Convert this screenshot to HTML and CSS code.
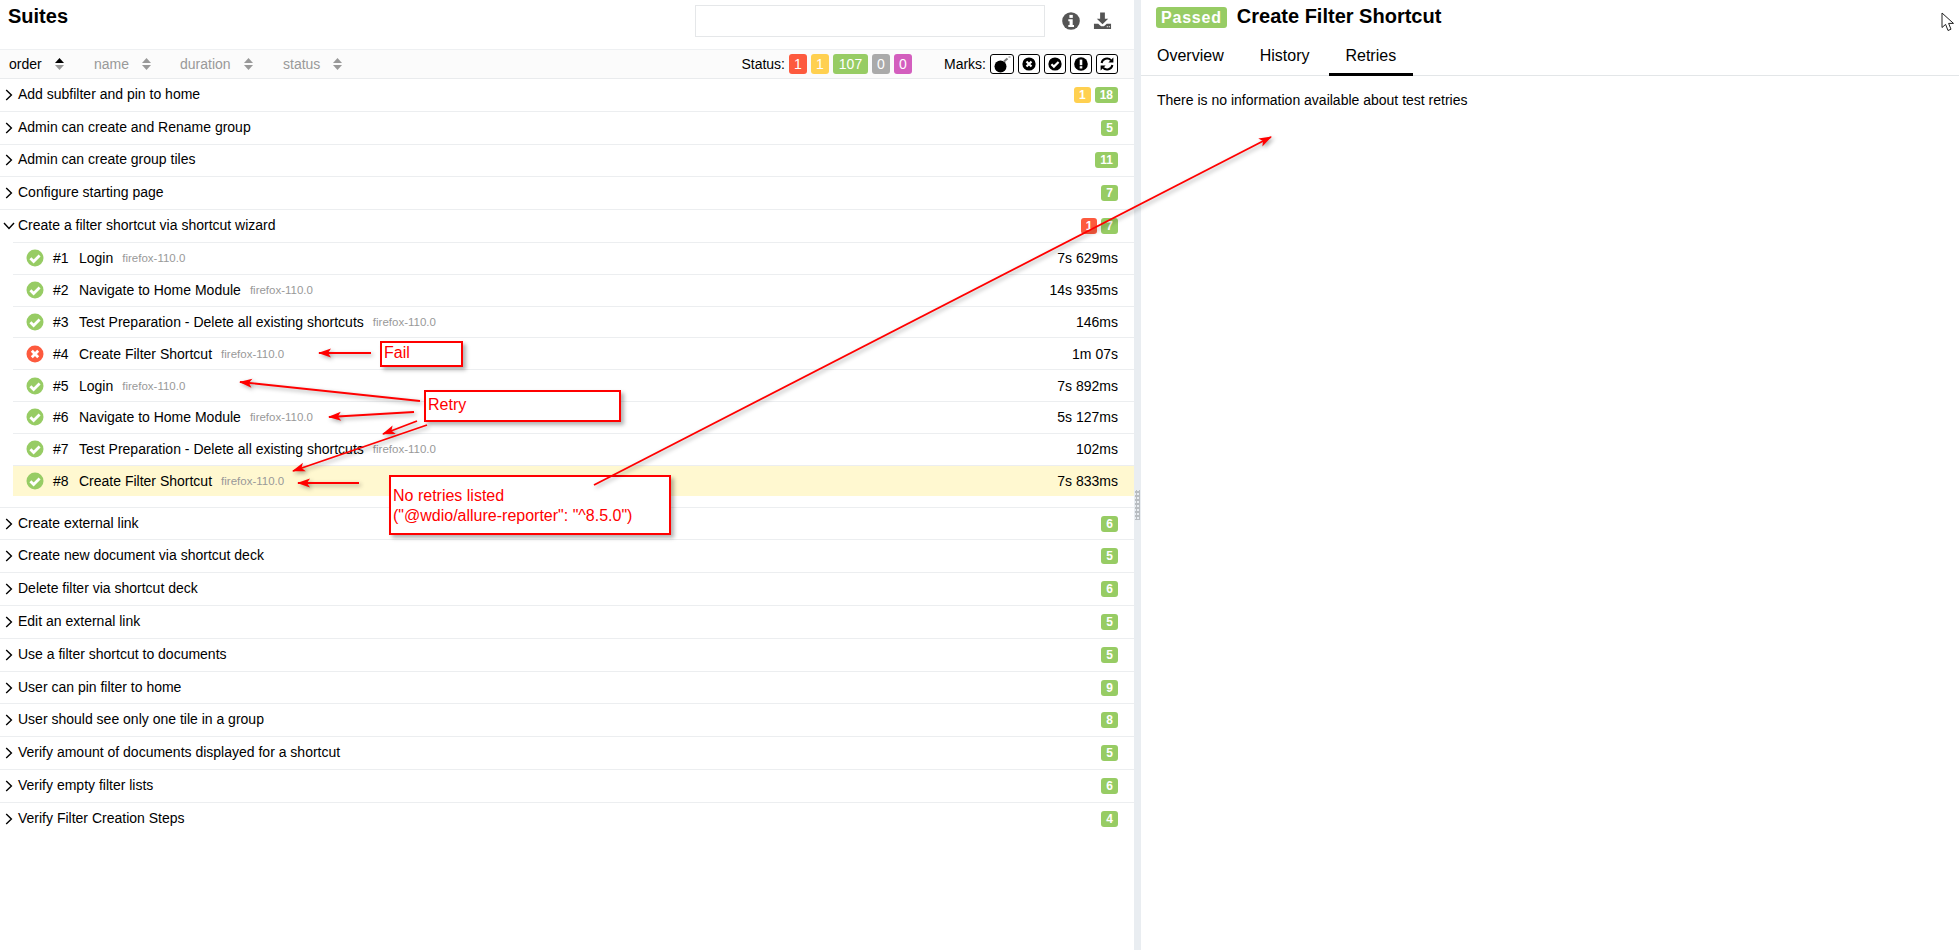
FILE: index.html
```html
<!DOCTYPE html>
<html lang="en">
<head>
<meta charset="utf-8">
<title>Allure Report - Suites</title>
<link rel="stylesheet" href="styles.css">
</head>
<body>
<svg class="defs" width="0" height="0" aria-hidden="true">
  <defs>
    <symbol id="ok" viewBox="0 0 18 18"><circle cx="9" cy="9" r="8.5" fill="currentColor"/><path d="M4.4 9.2 7.6 12.4 13.6 6.4" fill="none" stroke="#fff" stroke-width="2.8"/></symbol>
    <symbol id="bad" viewBox="0 0 18 18"><circle cx="9" cy="9" r="8.5" fill="currentColor"/><path d="M5.8 5.8 12.2 12.2M12.2 5.8 5.8 12.2" fill="none" stroke="#fff" stroke-width="2.8"/></symbol>
    <symbol id="sort" viewBox="0 0 9 12"><path d="M4.5 0 9 5H0Z" fill="currentColor"/><path d="M0 7H9L4.5 12Z" fill="#999"/></symbol>
    <symbol id="chev" viewBox="0 0 8 12"><path d="M1.2 1 6.4 6 1.2 11" fill="none" stroke="currentColor" stroke-width="1.4"/></symbol>
    <symbol id="down" viewBox="0 0 12 8"><path d="M1 1 6 6.4 11 1" fill="none" stroke="currentColor" stroke-width="1.4"/></symbol>
  </defs>
</svg>

<main class="app">
  <section class="left">
    <header class="head">
      <h2 class="title">Suites</h2>
      <div class="search"></div>
      <svg class="ico-info" width="18" height="18" viewBox="0 0 18 18"><circle cx="9" cy="9" r="8.8" fill="#555"/><rect x="7.4" y="2.9" width="3.4" height="3" fill="#fff"/><path d="M6.3 7.3H10.7V13H12V15H6.3V13H7.6V9.3H6.3Z" fill="#fff"/></svg>
      <svg class="ico-dl" width="19" height="18" viewBox="0 0 20 18"><path d="M7.5 0H12.5V6.5H16L10 12.5 4 6.5H7.5Z" fill="#555"/><path d="M1 12H5.5L8.5 14.5H11.5L14.5 12H19V17.5H1Z" fill="#555"/><path d="M14.5 15H15.7M16.6 15H17.8" stroke="#fff" stroke-width="1.2"/></svg>
    </header>

    <div class="bar">
      <span class="sorter active sorter-order">order <svg class="sort" width="9" height="12"><use href="#sort"/></svg></span>
      <span class="sorter sorter-name">name <svg class="sort" width="9" height="12"><use href="#sort"/></svg></span>
      <span class="sorter sorter-duration">duration <svg class="sort" width="9" height="12"><use href="#sort"/></svg></span>
      <span class="sorter sorter-status">status <svg class="sort" width="9" height="12"><use href="#sort"/></svg></span>
      <span class="spacer"></span>
      <span class="bar-label">Status:</span>
      <span class="pill failed">1</span><span class="pill broken">1</span><span class="pill passed wide">107</span><span class="pill skipped">0</span><span class="pill unknown">0</span>
      <span class="bar-label marks-label">Marks:</span>
      <span class="mark first"><svg width="20" height="17" viewBox="0 0 20 17"><circle cx="8.5" cy="10.5" r="6" fill="#000"/><path d="M12 5.5 15.5 2.5" stroke="#777" stroke-width="2"/><path d="M16.5 1 18.5 1" stroke="#999" stroke-width="1.2"/></svg></span>
      <span class="mark"><svg width="14" height="14" viewBox="0 0 18 18"><use href="#bad"/></svg></span>
      <span class="mark"><svg width="14" height="14" viewBox="0 0 18 18"><use href="#ok"/></svg></span>
      <span class="mark"><svg width="14" height="14" viewBox="0 0 14 14"><circle cx="7" cy="7" r="6.8" fill="#000"/><rect x="5.7" y="2.6" width="2.6" height="5.6" fill="#fff"/><rect x="5.7" y="9.2" width="2.6" height="2.3" fill="#fff"/></svg></span>
      <span class="mark"><svg width="14" height="14" viewBox="0 0 14 14"><path d="M1.6 6A5.5 5.5 0 0 1 11 3.2" fill="none" stroke="#000" stroke-width="2"/><path d="M13.4.6V5.6H8.4Z" fill="#000"/><path d="M12.4 8A5.5 5.5 0 0 1 3 10.8" fill="none" stroke="#000" stroke-width="2"/><path d="M.6 13.4V8.4H5.6Z" fill="#000"/></svg></span>
    </div>

    <div class="row"><svg class="chev" width="8" height="12"><use href="#chev"/></svg><span class="name">Add subfilter and pin to home</span><span class="count broken">1</span><span class="count passed">18</span></div>
    <div class="row"><svg class="chev" width="8" height="12"><use href="#chev"/></svg><span class="name">Admin can create and Rename group</span><span class="count passed">5</span></div>
    <div class="row"><svg class="chev" width="8" height="12"><use href="#chev"/></svg><span class="name">Admin can create group tiles</span><span class="count passed">11</span></div>
    <div class="row"><svg class="chev" width="8" height="12"><use href="#chev"/></svg><span class="name">Configure starting page</span><span class="count passed">7</span></div>

    <div class="group">
      <div class="row open"><svg class="chev-open" width="12" height="8"><use href="#down"/></svg><span class="name">Create a filter shortcut via shortcut wizard</span><span class="count failed">1</span><span class="count passed">7</span></div>
      <div class="case"><svg class="st ok" width="18" height="18"><use href="#ok"/></svg><span class="num">#1</span><span class="case-name">Login</span><span class="env">firefox-110.0</span><span class="time">7s 629ms</span></div>
      <div class="case"><svg class="st ok" width="18" height="18"><use href="#ok"/></svg><span class="num">#2</span><span class="case-name">Navigate to Home Module</span><span class="env">firefox-110.0</span><span class="time">14s 935ms</span></div>
      <div class="case"><svg class="st ok" width="18" height="18"><use href="#ok"/></svg><span class="num">#3</span><span class="case-name">Test Preparation - Delete all existing shortcuts</span><span class="env">firefox-110.0</span><span class="time">146ms</span></div>
      <div class="case"><svg class="st bad" width="18" height="18"><use href="#bad"/></svg><span class="num">#4</span><span class="case-name">Create Filter Shortcut</span><span class="env">firefox-110.0</span><span class="time">1m 07s</span></div>
      <div class="case"><svg class="st ok" width="18" height="18"><use href="#ok"/></svg><span class="num">#5</span><span class="case-name">Login</span><span class="env">firefox-110.0</span><span class="time">7s 892ms</span></div>
      <div class="case"><svg class="st ok" width="18" height="18"><use href="#ok"/></svg><span class="num">#6</span><span class="case-name">Navigate to Home Module</span><span class="env">firefox-110.0</span><span class="time">5s 127ms</span></div>
      <div class="case"><svg class="st ok" width="18" height="18"><use href="#ok"/></svg><span class="num">#7</span><span class="case-name">Test Preparation - Delete all existing shortcuts</span><span class="env">firefox-110.0</span><span class="time">102ms</span></div>
      <div class="case selected"><svg class="st ok" width="18" height="18"><use href="#ok"/></svg><span class="num">#8</span><span class="case-name">Create Filter Shortcut</span><span class="env">firefox-110.0</span><span class="time">7s 833ms</span></div>
    </div>

    <div class="row"><svg class="chev" width="8" height="12"><use href="#chev"/></svg><span class="name">Create external link</span><span class="count passed">6</span></div>
    <div class="row"><svg class="chev" width="8" height="12"><use href="#chev"/></svg><span class="name">Create new document via shortcut deck</span><span class="count passed">5</span></div>
    <div class="row"><svg class="chev" width="8" height="12"><use href="#chev"/></svg><span class="name">Delete filter via shortcut deck</span><span class="count passed">6</span></div>
    <div class="row"><svg class="chev" width="8" height="12"><use href="#chev"/></svg><span class="name">Edit an external link</span><span class="count passed">5</span></div>
    <div class="row"><svg class="chev" width="8" height="12"><use href="#chev"/></svg><span class="name">Use a filter shortcut to documents</span><span class="count passed">5</span></div>
    <div class="row"><svg class="chev" width="8" height="12"><use href="#chev"/></svg><span class="name">User can pin filter to home</span><span class="count passed">9</span></div>
    <div class="row"><svg class="chev" width="8" height="12"><use href="#chev"/></svg><span class="name">User should see only one tile in a group</span><span class="count passed">8</span></div>
    <div class="row"><svg class="chev" width="8" height="12"><use href="#chev"/></svg><span class="name">Verify amount of documents displayed for a shortcut</span><span class="count passed">5</span></div>
    <div class="row"><svg class="chev" width="8" height="12"><use href="#chev"/></svg><span class="name">Verify empty filter lists</span><span class="count passed">6</span></div>
    <div class="row last"><svg class="chev" width="8" height="12"><use href="#chev"/></svg><span class="name">Verify Filter Creation Steps</span><span class="count passed">4</span></div>
  </section>

  <div class="splitter"><span class="grip"></span></div>

  <section class="right">
    <header class="detail-head">
      <span class="status-label">Passed</span>
      <h2 class="detail-title">Create Filter Shortcut</h2>
    </header>
    <nav class="tabs">
      <span class="tab">Overview</span>
      <span class="tab">History</span>
      <span class="tab current">Retries</span>
    </nav>
    <p class="empty">There is no information available about test retries</p>
  </section>
</main>

<div class="note note-fail">Fail</div>
<div class="note note-retry">Retry</div>
<div class="note note-none">No retries listed<br>("@wdio/allure-reporter": "^8.5.0")</div>

<svg class="arrows" width="1959" height="950" viewBox="0 0 1959 950" aria-hidden="true">
  <defs>
    <marker id="head" markerUnits="userSpaceOnUse" markerWidth="14" markerHeight="10" refX="1" refY="5" orient="auto">
      <path d="M0 5 13 .5 10 5 13 9.5Z" fill="#f00"/>
    </marker>
  </defs>
  <g stroke="#f00" stroke-width="1.8" fill="none">
    <line x1="319" y1="353" x2="371" y2="353" marker-start="url(#head)"/>
    <line x1="240" y1="382" x2="420" y2="401" marker-start="url(#head)"/>
    <line x1="329" y1="417" x2="414" y2="412" marker-start="url(#head)"/>
    <line x1="383" y1="434" x2="417" y2="421" marker-start="url(#head)"/>
    <line x1="293" y1="471" x2="427" y2="425" marker-start="url(#head)"/>
    <line x1="298" y1="483" x2="359" y2="483" marker-start="url(#head)"/>
    <line x1="1271" y1="137" x2="594" y2="485" marker-start="url(#head)"/>
  </g>
</svg>

<svg class="cursor" width="14" height="20" viewBox="0 0 14 20" aria-hidden="true"><path d="M1 1V15.5L4.6 12.4 7 18.5 10 17.2 7.6 11.4H12.5Z" fill="#fff" stroke="#222" stroke-width="1"/></svg>
</body>
</html>
```
FILE: styles.css
```css
* { box-sizing: border-box; }
html, body { margin: 0; height: 100%; overflow: hidden; }
body { font-family: "Liberation Sans", Arial, sans-serif; font-size: 14px; color: #000; background: #fff; position: relative; }
.defs { position: absolute; }
.app { display: flex; height: 950px; }
.left { width: 1134px; flex: none; }
.right { flex: 1; min-width: 0; }

.head { display: flex; align-items: center; height: 49px; padding: 0 22px 0 8px; }
.title { margin: 0 0 18px; font-size: 20px; line-height: 26px; font-weight: 700; }
.search { width: 350px; height: 32px; margin: 0 0 7px auto; border: 1.5px solid #e5e7e9; }
.ico-info { margin: 0 0 7px 17px; }
.ico-dl { margin: 0 0 7px 13px; }

.bar { display: flex; align-items: center; height: 30px; padding: 0 16px 0 9px; background: #fbfbfb; border-top: 1px solid #eef0f2; border-bottom: 1px solid #e9ebed; }
.sorter { display: inline-flex; align-items: center; color: #999; }
.sorter.active { color: #000; }
.sort { margin-left: 13px; color: #999; }
.active .sort { color: #000; }
.sorter-order { width: 85px; }
.sorter-name { width: 86px; }
.sorter-duration { width: 103px; }
.spacer { flex: 1; }
.bar-label { margin-right: 4px; }
.marks-label { margin-left: 32px; }

.pill { display: inline-block; flex: none; width: 18px; height: 20px; margin-right: 4px; border-radius: 3px; color: #fff; text-align: center; line-height: 20px; font-size: 14px; }
.pill.wide { width: 35px; }
.failed { background: #fd5a3e; }
.broken { background: #ffd050; }
.passed { background: #97cc64; }
.skipped { background: #aaa; }
.unknown { background: #d35ebe; margin-right: 0; }

.mark { display: inline-flex; align-items: center; justify-content: center; width: 22px; height: 20px; margin-left: 4px; border: 1px solid #000; border-radius: 3px; background: #fff; }
.mark.first { width: 24px; margin-left: 0; }

.row { display: flex; align-items: center; height: 32.8px; padding: 0 16px 0 5px; border-bottom: 1px solid #eceef0; }
.row.open { height: 31.8px; border-bottom: 0; padding-left: 3px; }
.row.last { border-bottom: 0; }
.chev { flex: none; margin-right: 5px; color: #000; }
.chev-open { flex: none; margin-right: 3px; color: #000; }
.name { flex: 1; margin-top: -2px; }
.count { display: inline-block; min-width: 16px; height: 16px; margin-left: 4px; padding: 0 5px; border-radius: 3px; color: #fff; font-size: 12px; font-weight: 700; line-height: 16px; text-align: center; }

.group { border-bottom: 1px solid #eceef0; padding-bottom: 10.3px; }
.case { display: flex; align-items: center; height: 31.8px; margin-left: 13px; padding: 0 16px 0 13px; border-top: 1px solid #eceef0; }
.case.selected { background: #fff8d0; }
.st { flex: none; margin-right: 9px; }
.st.ok { color: #97cc64; }
.st.bad { color: #fd5a3e; }
.num { width: 26px; flex: none; }
.env { margin-left: 9px; color: #999; font-size: 11.5px; }
.time { margin-left: auto; }

.splitter { width: 7px; flex: none; background: #e9edf1; position: relative; }
.grip { position: absolute; left: 1px; top: 490px; width: 5px; height: 30px; background-image: radial-gradient(#b9bdc1 1.2px, transparent 1.3px); background-size: 3px 4px; }

.detail-head { display: flex; align-items: center; height: 32px; padding: 0 0 0 15px; }
.status-label { padding: 0 5px; height: 21px; margin: 3px 10px 0 0; border-radius: 3px; background: #97cc64; color: #fff; font-size: 16px; font-weight: 700; line-height: 21px; letter-spacing: .8px; }
.detail-title { margin: 0; font-size: 20px; line-height: 26px; font-weight: 700; }
.tabs { display: flex; gap: 3px; height: 44px; border-bottom: 1px solid #e3e6e8; }
.tab { display: block; height: 44px; padding: 9px 17px 0 16px; font-size: 16px; line-height: 30px; }
.tab.current { border-bottom: 3px solid #000; }
.empty { margin: 15px 0 0 16px; line-height: 18px; }

.note { position: absolute; border: 2px solid #f00; background: #fff; color: #f00; font-size: 16px; line-height: 20px; padding-left: 2px; box-shadow: 3px 3px 4px rgba(0,0,0,.3); }
.note-fail { left: 380px; top: 341px; width: 83px; height: 26px; }
.note-retry { left: 424px; top: 390px; width: 197px; height: 32px; padding-top: 3px; }
.note-none { left: 389px; top: 475px; width: 282px; height: 60px; padding-top: 9px; }

.arrows { position: absolute; left: 0; top: 0; pointer-events: none; filter: drop-shadow(2px 2px 2px rgba(0,0,0,.35)); }
.cursor { position: absolute; left: 1941px; top: 12px; }
```
